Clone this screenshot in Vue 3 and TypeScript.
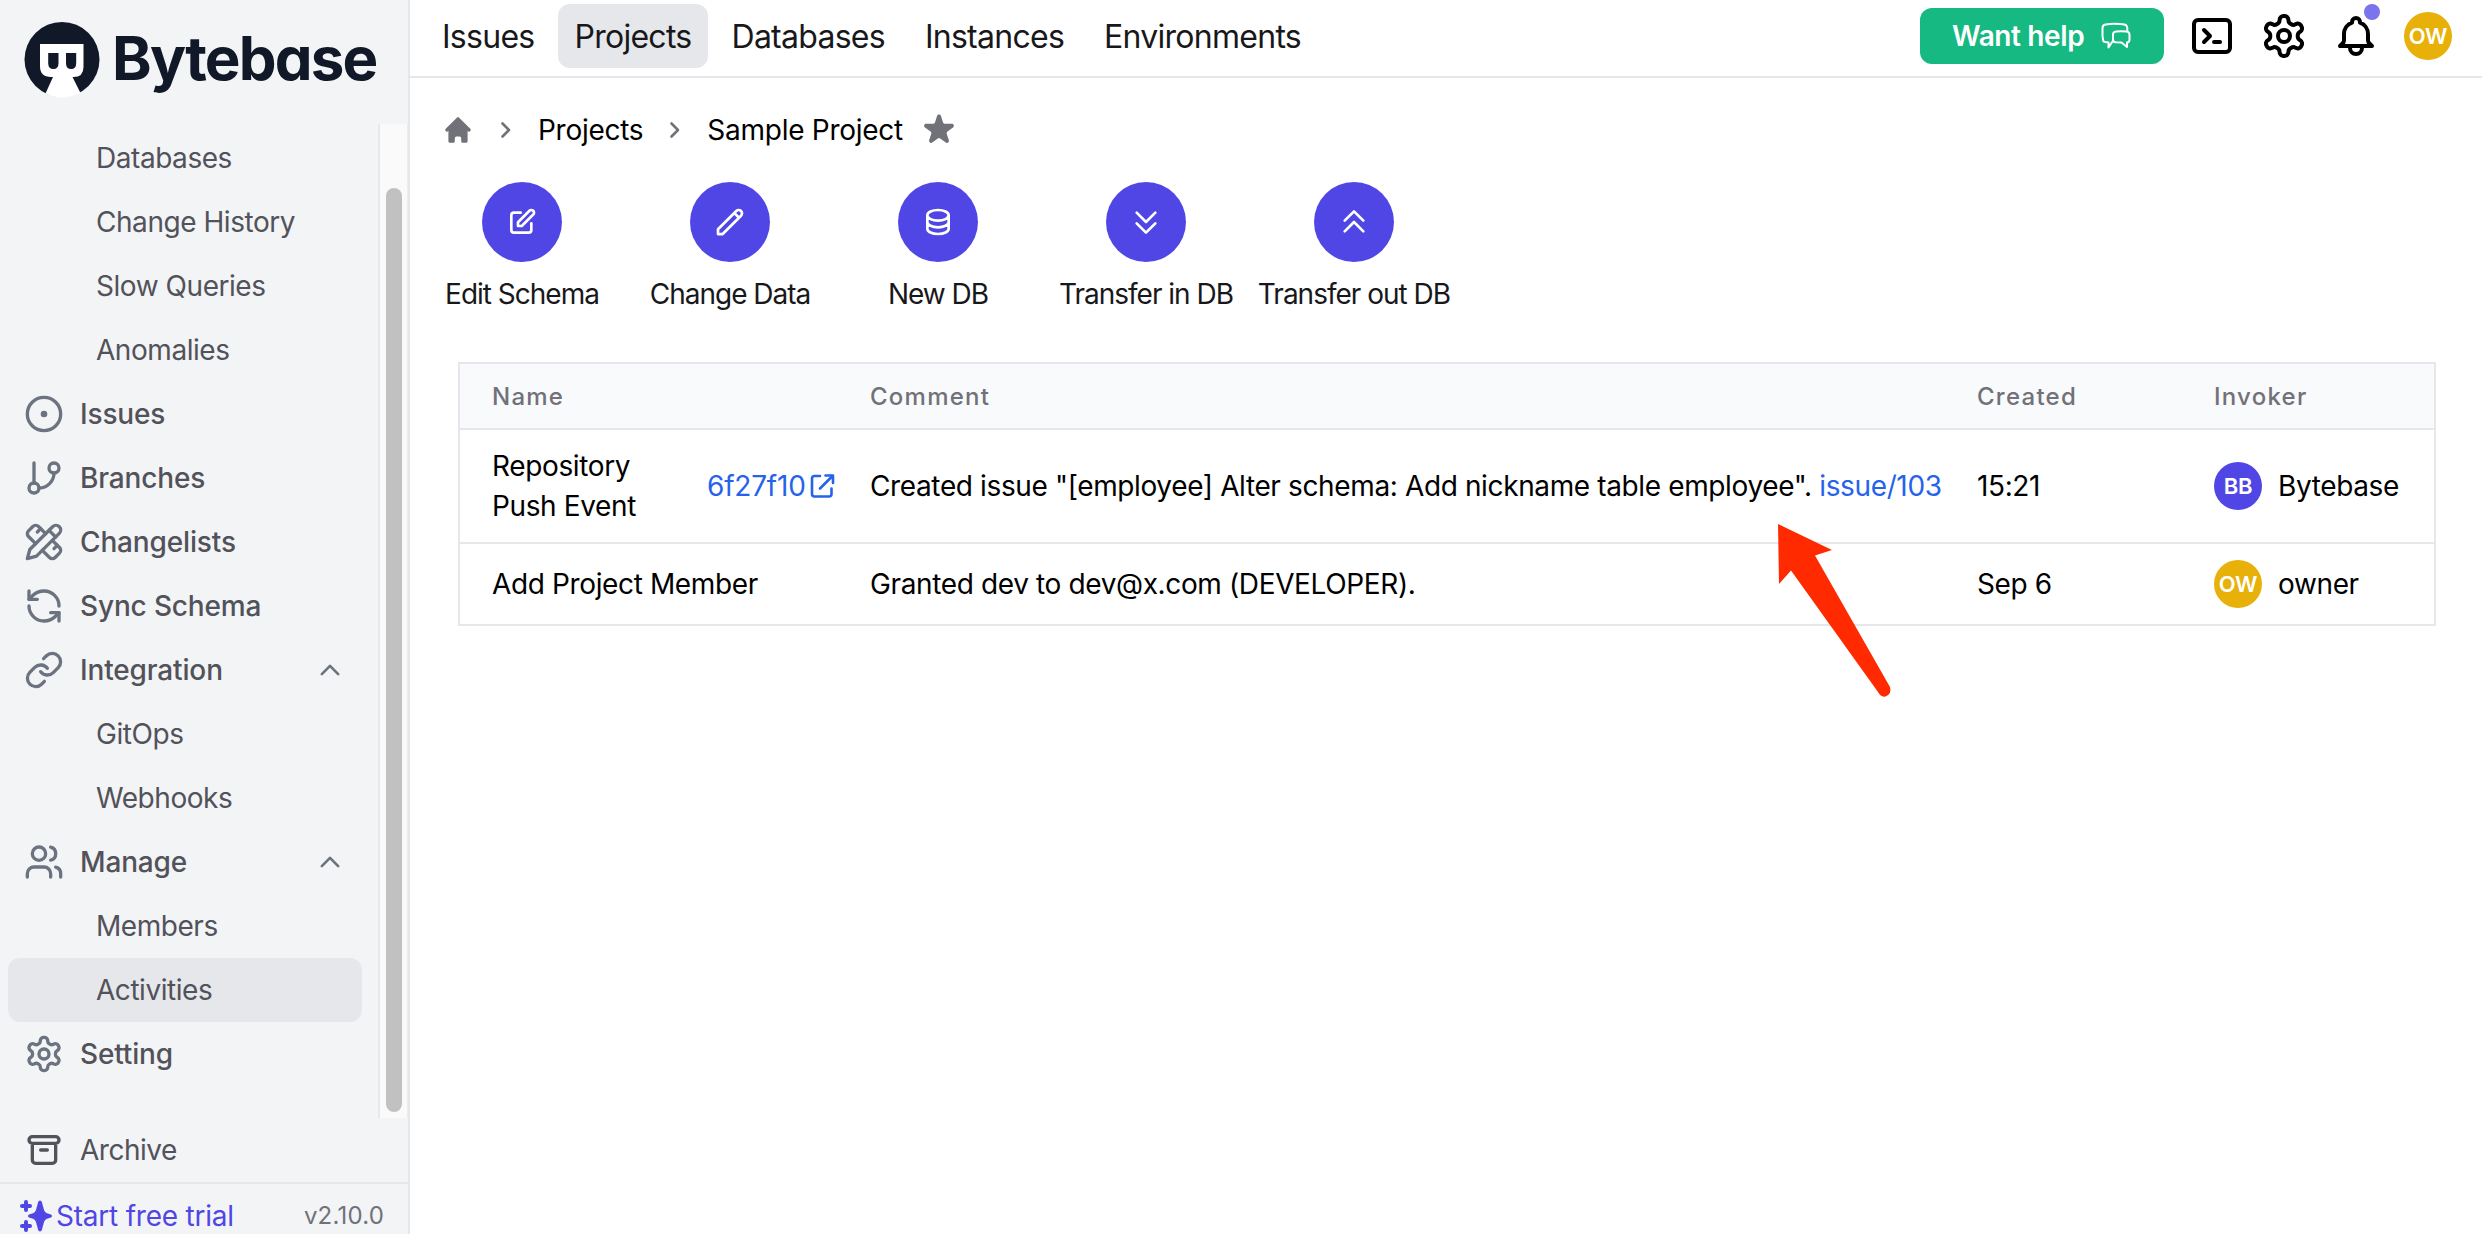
<script setup lang="ts">
interface NavItem {
  label: string
  paths?: string[]
  expandable?: boolean
  active?: boolean
}

const gear =
  'M12.22 2h-.44a2 2 0 0 0-2 2v.18a2 2 0 0 1-1 1.73l-.43.25a2 2 0 0 1-2 0l-.15-.08a2 2 0 0 0-2.73.73l-.22.38a2 2 0 0 0 .73 2.73l.15.1a2 2 0 0 1 1 1.72v.51a2 2 0 0 1-1 1.74l-.15.09a2 2 0 0 0-.73 2.73l.22.38a2 2 0 0 0 2.73.73l.15-.08a2 2 0 0 1 2 0l.43.25a2 2 0 0 1 1 1.73V20a2 2 0 0 0 2 2h.44a2 2 0 0 0 2-2v-.18a2 2 0 0 1 1-1.73l.43-.25a2 2 0 0 1 2 0l.15.08a2 2 0 0 0 2.73-.73l.22-.39a2 2 0 0 0-.73-2.73l-.15-.08a2 2 0 0 1-1-1.74v-.5a2 2 0 0 1 1-1.74l.15-.09a2 2 0 0 0 .73-2.73l-.22-.38a2 2 0 0 0-2.73-.73l-.15.08a2 2 0 0 1-2 0l-.43-.25a2 2 0 0 1-1-1.73V4a2 2 0 0 0-2-2z'
const gearHole = 'M15 12a3 3 0 1 1-6 0a3 3 0 1 1 6 0z'

const nav: NavItem[] = [
  { label: 'Databases' },
  { label: 'Change History' },
  { label: 'Slow Queries' },
  { label: 'Anomalies' },
  { label: 'Issues', paths: ['M22 12a10 10 0 1 1-20 0a10 10 0 1 1 20 0z', 'M13 12a1 1 0 1 1-2 0a1 1 0 1 1 2 0z'] },
  {
    label: 'Branches',
    paths: ['M6 3v12', 'M21 6a3 3 0 1 1-6 0a3 3 0 1 1 6 0z', 'M9 18a3 3 0 1 1-6 0a3 3 0 1 1 6 0z', 'M18 9a9 9 0 0 1-9 9'],
  },
  {
    label: 'Changelists',
    paths: [
      'm15 5 4 4',
      'M13 7 8.7 2.7a2.41 2.41 0 0 0-3.4 0L2.7 5.3a2.41 2.41 0 0 0 0 3.4L7 13',
      'm8 6 2-2',
      'm2 22 5.5-1.5L21.17 6.83a2.82 2.82 0 0 0-4-4L3.5 16.5Z',
      'm18 16 2-2',
      'm17 11 4.3 4.3c.94.94.94 2.46 0 3.4l-2.6 2.6c-.94.94-2.46.94-3.4 0L11 17',
    ],
  },
  {
    label: 'Sync Schema',
    paths: [
      'M21 12a9 9 0 0 0-9-9 9.75 9.75 0 0 0-6.74 2.74L3 8',
      'M3 3v5h5',
      'M3 12a9 9 0 0 0 9 9 9.75 9.75 0 0 0 6.74-2.74L21 16',
      'M16 16h5v5',
    ],
  },
  {
    label: 'Integration',
    expandable: true,
    paths: [
      'M10 13a5 5 0 0 0 7.54.54l3-3a5 5 0 0 0-7.07-7.07l-1.72 1.71',
      'M14 11a5 5 0 0 0-7.54-.54l-3 3a5 5 0 0 0 7.07 7.07l1.71-1.71',
    ],
  },
  { label: 'GitOps' },
  { label: 'Webhooks' },
  {
    label: 'Manage',
    expandable: true,
    paths: [
      'M16 21v-2a4 4 0 0 0-4-4H6a4 4 0 0 0-4 4v2',
      'M13 7a4 4 0 1 1-8 0a4 4 0 1 1 8 0z',
      'M22 21v-2a4 4 0 0 0-3-3.87',
      'M16 3.13a4 4 0 0 1 0 7.75',
    ],
  },
  { label: 'Members' },
  { label: 'Activities', active: true },
  { label: 'Setting', paths: [gear, gearHole] },
]

const tabs = ['Issues', 'Projects', 'Databases', 'Instances', 'Environments']

const actions = [
  {
    label: 'Edit Schema',
    path: 'M11 5H6a2 2 0 00-2 2v11a2 2 0 002 2h11a2 2 0 002-2v-5m-1.414-9.414a2 2 0 112.828 2.828L11.828 15H9v-2.828l8.586-8.586z',
  },
  {
    label: 'Change Data',
    path: 'M15.232 5.232l3.536 3.536m-2.036-5.036a2.5 2.5 0 113.536 3.536L6.5 21.036H3v-3.572L16.732 3.732z',
  },
  {
    label: 'New DB',
    path: 'M4 7v10c0 2.21 3.582 4 8 4s8-1.79 8-4V7M4 7c0 2.21 3.582 4 8 4s8-1.79 8-4M4 7c0-2.21 3.582-4 8-4s8 1.79 8 4m0 5c0 2.21-3.582 4-8 4s-8-1.79-8-4',
  },
  { label: 'Transfer in DB', path: 'M19 13l-7 7-7-7m14-8l-7 7-7-7' },
  { label: 'Transfer out DB', path: 'M5 11l7-7 7 7M5 19l7-7 7 7' },
]
</script>

<template>
  <div class="app">
    <aside class="sidebar">
      <div class="brand">
        <svg class="brand-mark" viewBox="0 0 76 76">
          <circle cx="38" cy="37.5" r="37.5" fill="#111827" />
          <path
            fill="#fff"
            d="M16 22H59.500V45Q59.500 55 49.500 55H48.500L56.500 71Q47 75.500 38 75.500Q29 75.500 21.500 71.500L29 55H27Q16 55 16 44Z"
          />
          <path fill="#111827" d="M24.200 31H34.500V41Q34.500 47 29.400 47Q24.200 47 24.200 41Z" />
          <path fill="#111827" d="M42 31H52.200V41Q52.200 47 47.100 47Q42 47 42 41Z" />
        </svg>
        <span class="brand-name">Bytebase</span>
      </div>

      <div class="scroller">
        <nav class="nav">
          <div
            v-for="item in nav"
            :key="item.label"
            class="nav-item"
            :class="{ sub: !item.paths, active: item.active }"
          >
            <svg v-if="item.paths" class="nav-icon" viewBox="0 0 24 24">
              <path v-for="d in item.paths" :key="d" :d="d" />
            </svg>
            <span class="nav-label">{{ item.label }}</span>
            <svg v-if="item.expandable" class="nav-chevron" viewBox="0 0 24 24">
              <path d="m19 15.500-7-7-7 7" />
            </svg>
          </div>
        </nav>
        <div class="track"><div class="thumb"></div></div>
      </div>

      <div class="archive">
        <svg class="nav-icon" viewBox="0 0 24 24">
          <path d="M5 8h14M5 8a2 2 0 110-4h14a2 2 0 110 4M5 8v10a2 2 0 002 2h10a2 2 0 002-2V8m-9 4h4" />
        </svg>
        <span>Archive</span>
      </div>

      <div class="footer">
        <svg class="sparkles" viewBox="0 0 32 32">
          <path
            d="M20 0.500Q21.500 0.500 22 2.500L24 10Q24.700 12.500 27 13.300L31 14.600Q32 15.200 32 16Q32 16.800 31 17.400L27 18.700Q24.700 19.500 24 22L22 29.500Q21.500 31.500 20 31.500Q18.500 31.500 18 29.500L16 22Q15.300 19.500 13 18.700L9 17.400Q8 16.800 8 16Q8 15.200 9 14.600L13 13.300Q15.300 12.500 16 10L18 2.500Q18.500 0.500 20 0.500Z"
          />
          <path class="plus" d="M6 2V10M2 6H10M6 22V30M2 26H10" />
        </svg>
        <span class="trial">Start free trial</span>
        <span class="version">v2.10.0</span>
      </div>
    </aside>

    <main class="main">
      <header class="topbar">
        <div class="tabs">
          <div v-for="t in tabs" :key="t" class="tab" :class="{ current: t === 'Projects' }">{{ t }}</div>
        </div>
        <div class="tools">
          <div class="help">
            <span>Want help</span>
            <svg class="chat" viewBox="0 0 30 28">
              <path
                d="M11.500 19.500L7.500 25.500V20.500L4 20Q2 19.700 2 17.500L1.500 14V6Q1.500 3 4.500 2.500Q14 0.800 23.500 2.500Q26 3 26.300 6V9"
              />
              <path
                d="M15 9.500Q20 9 25.500 9.500Q28.500 9.800 28.500 12.500V17.500Q28.500 20.300 26 20.600V25L20.500 20.500L14.500 20.300Q12 20 12 17.500V12.500Q12 9.800 15 9.500Z"
              />
            </svg>
          </div>
          <svg class="tool" viewBox="0 0 24 24">
            <path d="M8 9l3 3-3 3m5 0h3M5 20h14a2 2 0 002-2V6a2 2 0 00-2-2H5a2 2 0 00-2 2v12a2 2 0 002 2z" />
          </svg>
          <svg class="tool" viewBox="0 0 24 24"><path :d="gear" /><path :d="gearHole" /></svg>
          <div class="bell">
            <svg class="tool" viewBox="0 0 24 24">
              <path
                d="M15 17h5l-1.405-1.405A2.032 2.032 0 0118 14.158V11a6.002 6.002 0 00-4-5.659V5a2 2 0 10-4 0v.341C7.670 6.165 6 8.388 6 11v3.159c0 .538-.214 1.055-.595 1.436L4 17h5m6 0v1a3 3 0 11-6 0v-1m6 0H9"
              />
            </svg>
            <i class="dot"></i>
          </div>
          <span class="avatar yellow">OW</span>
        </div>
      </header>

      <div class="crumbs">
        <svg class="home" viewBox="0 0 20 20">
          <path
            d="M10.707 2.293a1 1 0 00-1.414 0l-7 7a1 1 0 001.414 1.414L4 10.414V17a1 1 0 001 1h2a1 1 0 001-1v-2a1 1 0 011-1h2a1 1 0 011 1v2a1 1 0 001 1h2a1 1 0 001-1v-6.586l.293.293a1 1 0 001.414-1.414l-7-7z"
          />
        </svg>
        <svg class="sep" viewBox="0 0 12 20"><path d="M2.500 3.500L9 10L2.500 16.500" /></svg>
        <span>Projects</span>
        <svg class="sep" viewBox="0 0 12 20"><path d="M2.500 3.500L9 10L2.500 16.500" /></svg>
        <span>Sample Project</span>
        <svg class="star" viewBox="0 0 20 20">
          <path
            d="M9.049 2.927c.3-.921 1.603-.921 1.902 0l1.070 3.292a1 1 0 00.950.690h3.462c.969 0 1.371 1.240.588 1.810l-2.800 2.034a1 1 0 00-.364 1.118l1.070 3.292c.3.921-.755 1.688-1.540 1.118l-2.800-2.034a1 1 0 00-1.175 0l-2.800 2.034c-.784.570-1.838-.197-1.539-1.118l1.070-3.292a1 1 0 00-.364-1.118L2.980 8.720c-.783-.570-.380-1.810.588-1.810h3.461a1 1 0 00.951-.690l1.070-3.292z"
          />
        </svg>
      </div>

      <div class="actions">
        <div v-for="a in actions" :key="a.label" class="action">
          <div class="circle">
            <svg viewBox="0 0 24 24"><path :d="a.path" /></svg>
          </div>
          <span>{{ a.label }}</span>
        </div>
      </div>

      <div class="table">
        <div class="row head">
          <div>Name</div>
          <div>Comment</div>
          <div>Created</div>
          <div>Invoker</div>
        </div>
        <div class="row first">
          <div class="name">
            <span class="event">Repository Push Event</span>
            <a class="link commit">
              6f27f10<svg viewBox="0 0 24 24">
                <path d="M10 2H4.500A2.500 2.500 0 0 0 2 4.500V20a2.500 2.500 0 0 0 2.500 2.500H19a2.500 2.500 0 0 0 2.500-2.500V14.500M15.500 1.500H23V9M22.500 2L10 14.500" />
              </svg>
            </a>
          </div>
          <div>
            Created issue "[employee] Alter schema: Add nickname table employee".
            <a class="link">issue/103</a>
          </div>
          <div>15:21</div>
          <div class="invoker"><span class="avatar indigo">BB</span>Bytebase</div>
        </div>
        <div class="row second">
          <div>Add Project Member</div>
          <div>Granted dev to dev@x.com (DEVELOPER).</div>
          <div>Sep 6</div>
          <div class="invoker"><span class="avatar yellow">OW</span>owner</div>
        </div>
      </div>
    </main>

    <svg class="pointer" viewBox="0 0 116 176">
      <path d="M0 0L54 26L37 31.500L112 163Q114 170 107.500 172.500Q103 173.500 100 168L13 46.500L1 60Z" />
    </svg>
  </div>
</template>

<style>
body {
  overflow: hidden;
}
</style>

<style scoped>
.app {
  position: relative;
  box-sizing: border-box;
  display: flex;
  width: 2482px;
  height: 1234px;
  overflow: hidden;
  background: #fff;
  color: #000;
  font-family: Inter, "Liberation Sans", sans-serif;
  font-size: 28px;
  line-height: 40px;
  letter-spacing: -0.37px;
}
.app * {
  box-sizing: border-box;
}
svg {
  display: block;
  flex: none;
  overflow: visible;
}
.sidebar {
  display: flex;
  flex-direction: column;
  flex: none;
  width: 410px;
  height: 1234px;
  overflow: hidden;
  background: #f3f4f6;
  border-right: 2px solid #e5e7eb;
  color: #52525b;
}
.brand {
  display: flex;
  flex: none;
  height: 124px;
  padding: 22px 0 0 24px;
}
.brand-mark {
  width: 76px;
  height: 76px;
}
.brand-name {
  margin-left: 12px;
  color: #111827;
  font-size: 60px;
  font-weight: 700;
  line-height: 73px;
  letter-spacing: -1.8px;
  font-feature-settings: "cv11";
}
.scroller {
  display: flex;
  flex: none;
  height: 994px;
}
.nav {
  flex: none;
  width: 378px;
  padding: 2px 16px 0 8px;
}
.nav-item {
  display: flex;
  align-items: center;
  height: 64px;
  padding: 0 16px;
  border-radius: 12px;
  font-weight: 500;
  letter-spacing: -0.15px;
}
.nav-item.sub {
  padding-left: 88px;
  font-weight: 400;
  letter-spacing: -0.45px;
}
.nav-item.active {
  background: #e5e7eb;
}
.nav-icon {
  width: 40px;
  height: 40px;
  margin-right: 16px;
  fill: none;
  stroke: #6b7280;
  stroke-width: 2;
  stroke-linecap: round;
  stroke-linejoin: round;
}
.nav-label {
  flex: 1;
}
.nav-chevron {
  width: 28px;
  height: 28px;
  margin-right: 2px;
  fill: none;
  stroke: #6b7280;
  stroke-width: 2.3;
  stroke-linecap: round;
  stroke-linejoin: round;
}
.track {
  width: 30px;
  padding: 64px 4px 0 6px;
  background: #fafafa;
  border-left: 2px solid #e8e8e8;
  border-right: 1px solid #ededed;
}
.thumb {
  width: 16px;
  height: 924px;
  border-radius: 8px;
  background: #c1c1c1;
}
.archive {
  display: flex;
  flex: none;
  align-items: center;
  height: 64px;
  padding-left: 24px;
  letter-spacing: -0.5px;
}
.archive .nav-icon {
  stroke: #52525b;
}
.footer {
  display: flex;
  flex: none;
  align-items: center;
  height: 66px;
  padding: 0 24px 0 20px;
  border-top: 2px solid #e5e7eb;
}
.sparkles {
  width: 32px;
  height: 32px;
  fill: #4f46e5;
}
.sparkles .plus {
  fill: none;
  stroke: #4f46e5;
  stroke-width: 4;
  stroke-linecap: round;
}
.trial {
  margin-left: 4px;
  color: #4f46e5;
  letter-spacing: -0.22px;
}
.version {
  margin-left: auto;
  color: #71717a;
  font-size: 24px;
  letter-spacing: 0.2px;
}
.main {
  flex: 1;
  min-width: 0;
}
.topbar {
  display: flex;
  justify-content: space-between;
  height: 78px;
  border-bottom: 2px solid #e5e7eb;
}
.tabs {
  display: flex;
  gap: 8px;
  padding: 4px 0 0 16px;
}
.tab {
  height: 64px;
  padding: 0 16px;
  border-radius: 12px;
  color: #18181b;
  font-size: 32px;
  line-height: 66px;
  letter-spacing: -0.73px;
}
.tab.current {
  background: #e5e7eb;
}
.tools {
  display: flex;
  align-items: center;
  gap: 24px;
  height: 72px;
  padding-right: 30px;
}
.help {
  display: flex;
  align-items: center;
  justify-content: space-between;
  width: 244px;
  height: 56px;
  padding: 0 33px 0 32px;
  border-radius: 12px;
  background: #16b981;
  color: #fff;
  font-weight: 600;
}
.chat {
  width: 30px;
  height: 28px;
  fill: none;
  stroke: #fff;
  stroke-width: 2;
  stroke-linejoin: round;
  stroke-linecap: round;
}
.tool {
  width: 48px;
  height: 48px;
  fill: none;
  stroke: #000;
  stroke-width: 2;
  stroke-linecap: round;
  stroke-linejoin: round;
}
.bell {
  position: relative;
}
.dot {
  position: absolute;
  top: -8px;
  right: 0;
  width: 16px;
  height: 16px;
  border-radius: 50%;
  background: #7b74ec;
}
.avatar {
  display: flex;
  flex: none;
  align-items: center;
  justify-content: center;
  width: 48px;
  height: 48px;
  border-radius: 50%;
  color: #fff;
  font-size: 22px;
  font-weight: 600;
}
.yellow {
  background: #e7b10a;
}
.indigo {
  background: #4f46e5;
}
.crumbs {
  display: flex;
  align-items: center;
  height: 40px;
  margin: 32px 0 0 32px;
  letter-spacing: -0.27px;
}
.home {
  width: 32px;
  height: 32px;
  fill: #71717a;
}
.sep {
  width: 12px;
  height: 20px;
  margin: 0 26px;
  fill: none;
  stroke: #71717a;
  stroke-width: 2.6;
  stroke-linecap: round;
  stroke-linejoin: round;
}
.star {
  width: 40px;
  height: 40px;
  margin-left: 16px;
  fill: #71717a;
}
.actions {
  display: flex;
  gap: 8px;
  margin: 32px 0 0 12px;
}
.action {
  display: flex;
  flex-direction: column;
  align-items: center;
  width: 200px;
  color: #18181b;
  letter-spacing: -1px;
  white-space: nowrap;
}
.circle {
  display: flex;
  align-items: center;
  justify-content: center;
  width: 80px;
  height: 80px;
  margin-bottom: 12px;
  border-radius: 50%;
  background: #4f46e5;
}
.circle svg {
  width: 32px;
  height: 32px;
  fill: none;
  stroke: #fff;
  stroke-width: 2;
  stroke-linecap: round;
  stroke-linejoin: round;
}
.table {
  width: 1978px;
  margin: 48px 0 0 48px;
  border: 2px solid #e5e7eb;
}
.row {
  display: grid;
  grid-template-columns: 378px 1107px 237px 1fr;
  align-items: center;
  padding-left: 32px;
  white-space: nowrap;
}
.head {
  height: 64px;
  padding-top: 2px;
  background: #f9fafb;
  color: #71717a;
  font-size: 24px;
  font-weight: 500;
  letter-spacing: 1.25px;
}
.first {
  height: 114px;
  border-top: 2px solid #e5e7eb;
}
.second {
  height: 82px;
  border-top: 2px solid #e5e7eb;
}
.name {
  display: flex;
  align-items: center;
}
.event {
  width: 215px;
  padding-right: 40px;
  white-space: normal;
}
.link {
  color: #2563eb;
}
.commit {
  display: flex;
  align-items: center;
  letter-spacing: -0.2px;
}
.commit svg {
  width: 24px;
  height: 24px;
  margin-left: 4px;
  fill: none;
  stroke: #2563eb;
  stroke-width: 2.6;
  stroke-linecap: round;
  stroke-linejoin: round;
}
.invoker {
  display: flex;
  align-items: center;
  gap: 16px;
}
.pointer {
  position: absolute;
  left: 1778px;
  top: 524px;
  width: 116px;
  height: 176px;
  fill: #ff2a00;
}
</style>
